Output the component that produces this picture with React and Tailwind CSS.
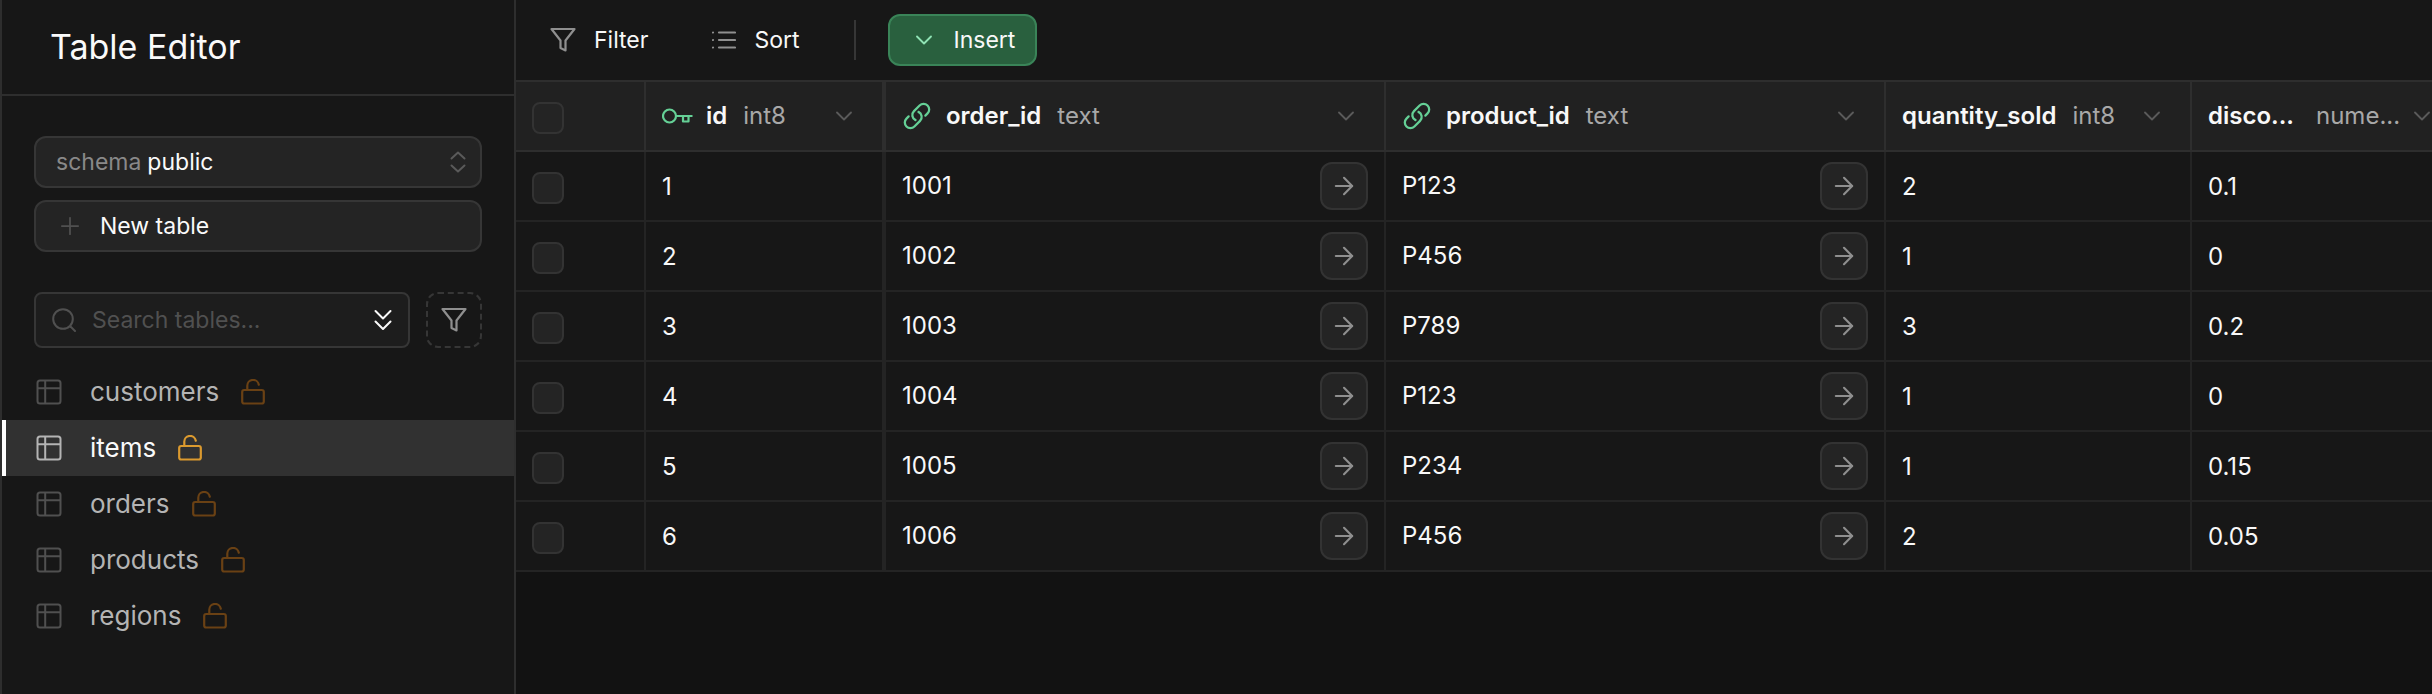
import { ChevronDown, Plus, ArrowRight } from "lucide-react";

const tables = ["customers", "items", "orders", "products", "regions"];

const rows = [
  [1, "1001", "P123", 2, "0.1"],
  [2, "1002", "P456", 1, "0"],
  [3, "1003", "P789", 3, "0.2"],
  [4, "1004", "P123", 1, "0"],
  [5, "1005", "P234", 1, "0.15"],
  [6, "1006", "P456", 2, "0.05"],
];

function FunnelIcon() {
  return (
    <svg viewBox="0 0 26 26" className="size-[26px] shrink-0" fill="none" stroke="currentColor" strokeWidth="2.200" strokeLinecap="round" strokeLinejoin="round" aria-hidden="true">
      <path d="M1.500 2h23L15.500 13.500v10l-5-2.500v-7.500z" />
    </svg>
  );
}

function ListIcon() {
  return (
    <svg viewBox="0 0 24 20" className="h-5 w-6 shrink-0" fill="none" stroke="currentColor" strokeWidth="2.200" strokeLinecap="round" aria-hidden="true">
      <path d="M7 2.500h16M7 10h16M7 17.500h16M1 2.500h.01M1 10h.01M1 17.500h.01" />
    </svg>
  );
}

function SearchIcon() {
  return (
    <svg viewBox="0 0 24 24" className="size-6 shrink-0" fill="none" stroke="currentColor" strokeWidth="2" strokeLinecap="round" aria-hidden="true">
      <circle cx="11" cy="11" r="9.800" />
      <path d="m18.500 18.500 4.500 4.500" />
    </svg>
  );
}

function DoubleChevronIcon() {
  return (
    <svg viewBox="0 0 18 22" className="h-[22px] w-[18px]" fill="none" stroke="currentColor" strokeWidth="2" strokeLinecap="round" strokeLinejoin="round" aria-hidden="true">
      <path d="m1.500 2 7.500 7.500L16.500 2M1.500 12.500l7.500 7.500 7.500-7.500" />
    </svg>
  );
}

function TableIcon() {
  return (
    <svg viewBox="0 0 26 26" className="size-[26px] shrink-0" fill="none" stroke="currentColor" strokeWidth="2" strokeLinejoin="round" aria-hidden="true">
      <rect x="1.500" y="1.500" width="23" height="23" rx="2.500" />
      <path d="M1.500 9.200h23M9.200 1.500v23" />
    </svg>
  );
}

function UnlockIcon() {
  return (
    <svg viewBox="0 0 24 26" className="h-[26px] w-6 shrink-0" fill="none" stroke="currentColor" strokeWidth="2.200" strokeLinecap="round" strokeLinejoin="round" aria-hidden="true">
      <rect x="1.200" y="11" width="21.600" height="13.500" rx="2" />
      <path d="M6.300 11V7a5.800 5.800 0 0 1 11.500-1.300" />
    </svg>
  );
}

function KeyIcon() {
  return (
    <svg viewBox="0 0 32 18" className="h-[18px] w-8 shrink-0" fill="none" stroke="currentColor" strokeWidth="2.200" strokeLinejoin="round" aria-hidden="true">
      <circle cx="7.500" cy="9" r="6.500" />
      <path d="M14 9h16.500M21 9v5.500h5.500V9" />
    </svg>
  );
}

function LinkIcon() {
  return (
    <svg viewBox="0 0 24 24" className="size-[30px] shrink-0" fill="none" stroke="currentColor" strokeWidth="1.800" strokeLinecap="round" strokeLinejoin="round" aria-hidden="true">
      <path d="M13.190 8.688a4.500 4.500 0 0 1 1.242 7.244l-4.500 4.500a4.500 4.500 0 0 1-6.364-6.364l1.757-1.757m13.350-.622 1.757-1.757a4.500 4.500 0 0 0-6.364-6.364l-4.500 4.500a4.500 4.500 0 0 0 1.242 7.244" />
    </svg>
  );
}

function SelectorIcon() {
  return (
    <svg viewBox="0 0 16 22" className="h-[22px] w-4 shrink-0 text-[#5a5a5a]" fill="none" stroke="currentColor" strokeWidth="2" strokeLinecap="round" strokeLinejoin="round" aria-hidden="true">
      <path d="M1.500 7.500 8 1.500l6.500 6M1.500 14.500l6.500 6 6.500-6" />
    </svg>
  );
}

function Tick({ label }) {
  return (
    <input type="checkbox" aria-label={label} className="block h-8 w-8 shrink-0 appearance-none rounded-lg border-2 border-[#333333] bg-[#242424]" />
  );
}

function HeadCell({ icon, name, type, narrow, frozen }) {
  return (
    <th className={`h-[70px] border-b-2 border-[#2e2e2e] bg-[#212121] p-0 font-normal ${frozen ? "border-r-4" : "border-r-2"}`}>
      <div className="flex items-center pr-6 pl-4">
        {icon && <span className="mr-3 flex w-8 text-[#65d096]">{icon}</span>}
        <span className={`whitespace-nowrap font-semibold text-[#f8f8f8] ${narrow ? "w-[92px]" : ""}`}>{name}</span>
        <span className="ml-4 whitespace-nowrap text-[#a8a8a8]">{type}</span>
        <button aria-label={`${name} column menu`} className="ml-auto shrink-0 text-[#5a5a5a]">
          <ChevronDown className="size-7" strokeWidth={1.600} />
        </button>
      </div>
    </th>
  );
}

function Cell({ children, link, frozen }) {
  return (
    <td className={`h-[70px] border-b-2 border-[#242424] bg-[#171717] p-0 ${frozen ? "border-r-4" : "border-r-2"}`}>
      <div className={`flex items-center justify-between px-4 ${link ? "" : "pt-0.5"}`}>
        <span>{children}</span>
        {link && (
          <button aria-label={`Open ${children}`} className="flex size-12 items-center justify-center rounded-xl border-2 border-[#333333] bg-[#242424] text-[#8f8f8f]">
            <ArrowRight className="size-7" strokeWidth={1.800} />
          </button>
        )}
      </div>
    </td>
  );
}

export default function App() {
  return (
    <div className="flex min-h-screen overflow-hidden border-l-2 border-[#2e2e2e] bg-[#121212] font-['Inter','Liberation_Sans',sans-serif] text-2xl text-[#f8f8f8]">
      <aside className="w-[514px] shrink-0 border-r-2 border-[#2e2e2e] bg-[#171717]">
        <header className="flex h-24 items-center border-b-2 border-[#2e2e2e] px-12">
          <h1 className="text-[34px] text-[#fafafa]">Table Editor</h1>
        </header>
        <div className="flex flex-col gap-3 px-8 pt-10 text-[23px]">
          <button className="flex h-[52px] items-center rounded-xl border-2 border-[#363636] bg-[#242424] pr-3.5 pl-5">
            <span className="text-[#898989]">schema</span>
            <span className="ml-1.5 text-[#fafafa]">public</span>
            <span className="ml-auto"><SelectorIcon /></span>
          </button>
          <button className="flex h-[52px] items-center rounded-xl border-2 border-[#363636] bg-[#242424] px-5">
            <Plus className="size-7 text-[#505050]" strokeWidth={1.500} />
            <span className="ml-4 text-[#fafafa]">New table</span>
          </button>
        </div>
        <div className="flex gap-4 px-8 pt-10 text-[23px]">
          <label className="flex h-14 min-w-0 flex-1 items-center rounded-lg border-2 border-[#363636] bg-[#1d1d1d] px-4 text-[#505050]">
            <SearchIcon />
            <input type="text" aria-label="Search tables" placeholder="Search tables..." className="ml-4 min-w-0 flex-1 bg-transparent outline-none placeholder:text-[#505050]" />
            <button aria-label="Sort tables" className="shrink-0 text-[#fafafa]">
              <DoubleChevronIcon />
            </button>
          </label>
          <button aria-label="Filter tables" className="flex size-14 items-center justify-center rounded-xl border-2 border-dashed border-[#363636] text-[#8f8f8f]">
            <FunnelIcon />
          </button>
        </div>
        <nav className="pt-4">
          {tables.map((name) => {
            const active = name === "items";
            return (
              <a key={name} href={`#${name}`} aria-current={active ? "page" : undefined} className={`flex h-14 items-center border-l-4 pl-[30px] text-[26px] ${active ? "border-white bg-[#313131] text-[#fafafa]" : "border-transparent text-[#b4b4b4]"}`}>
                <span className={active ? "text-[#b4b4b4]" : "text-[#505050]"}><TableIcon /></span>
                <span className="ml-7">{name}</span>
                <span className={`ml-[22px] ${active ? "text-[#db9a2f]" : "text-[#6a4114]"}`}><UnlockIcon /></span>
              </a>
            );
          })}
        </nav>
      </aside>
      <main className="min-w-0 flex-1 overflow-hidden">
        <div className="flex h-[82px] items-center border-b-2 border-[#2e2e2e] bg-[#171717] pl-[34px] text-[23px]">
          <button className="flex items-center gap-[18px]">
            <span className="text-[#8f8f8f]"><FunnelIcon /></span>Filter
          </button>
          <button className="ml-16 flex items-center gap-[18px]">
            <span className="text-[#8f8f8f]"><ListIcon /></span>Sort
          </button>
          <span className="ml-[54px] h-10 w-0.5 bg-[#363636]" />
          <button className="ml-8 flex h-[52px] items-center gap-4 rounded-xl border-2 border-[#3a8458] bg-[#29603e] px-5">
            <ChevronDown className="size-7 text-[#8fe3b4]" strokeWidth={1.600} />Insert
          </button>
        </div>
        <table className="w-[1946px] table-fixed border-separate border-spacing-0 text-left">
          <colgroup>
            <col className="w-[130px]" />
            <col className="w-[240px]" />
            <col className="w-[500px]" />
            <col className="w-[500px]" />
            <col className="w-[306px]" />
            <col className="w-[270px]" />
          </colgroup>
          <thead>
            <tr>
              <th className="h-[70px] border-r-2 border-b-2 border-[#2e2e2e] bg-[#212121] p-0 pt-1 pl-4"><Tick label="Select all rows" /></th>
              <HeadCell icon={<KeyIcon />} name="id" type="int8" frozen />
              <HeadCell icon={<LinkIcon />} name="order_id" type="text" />
              <HeadCell icon={<LinkIcon />} name="product_id" type="text" />
              <HeadCell name="quantity_sold" type="int8" />
              <HeadCell name="disco..." type="nume..." narrow />
            </tr>
          </thead>
          <tbody>
            {rows.map(([id, order, product, quantity, discount]) => (
              <tr key={id}>
                <td className="h-[70px] border-r-2 border-b-2 border-[#242424] bg-[#171717] p-0 pt-1 pl-4"><Tick label={`Select row ${id}`} /></td>
                <Cell frozen>{id}</Cell>
                <Cell link>{order}</Cell>
                <Cell link>{product}</Cell>
                <Cell>{quantity}</Cell>
                <Cell>{discount}</Cell>
              </tr>
            ))}
          </tbody>
        </table>
      </main>
    </div>
  );
}
